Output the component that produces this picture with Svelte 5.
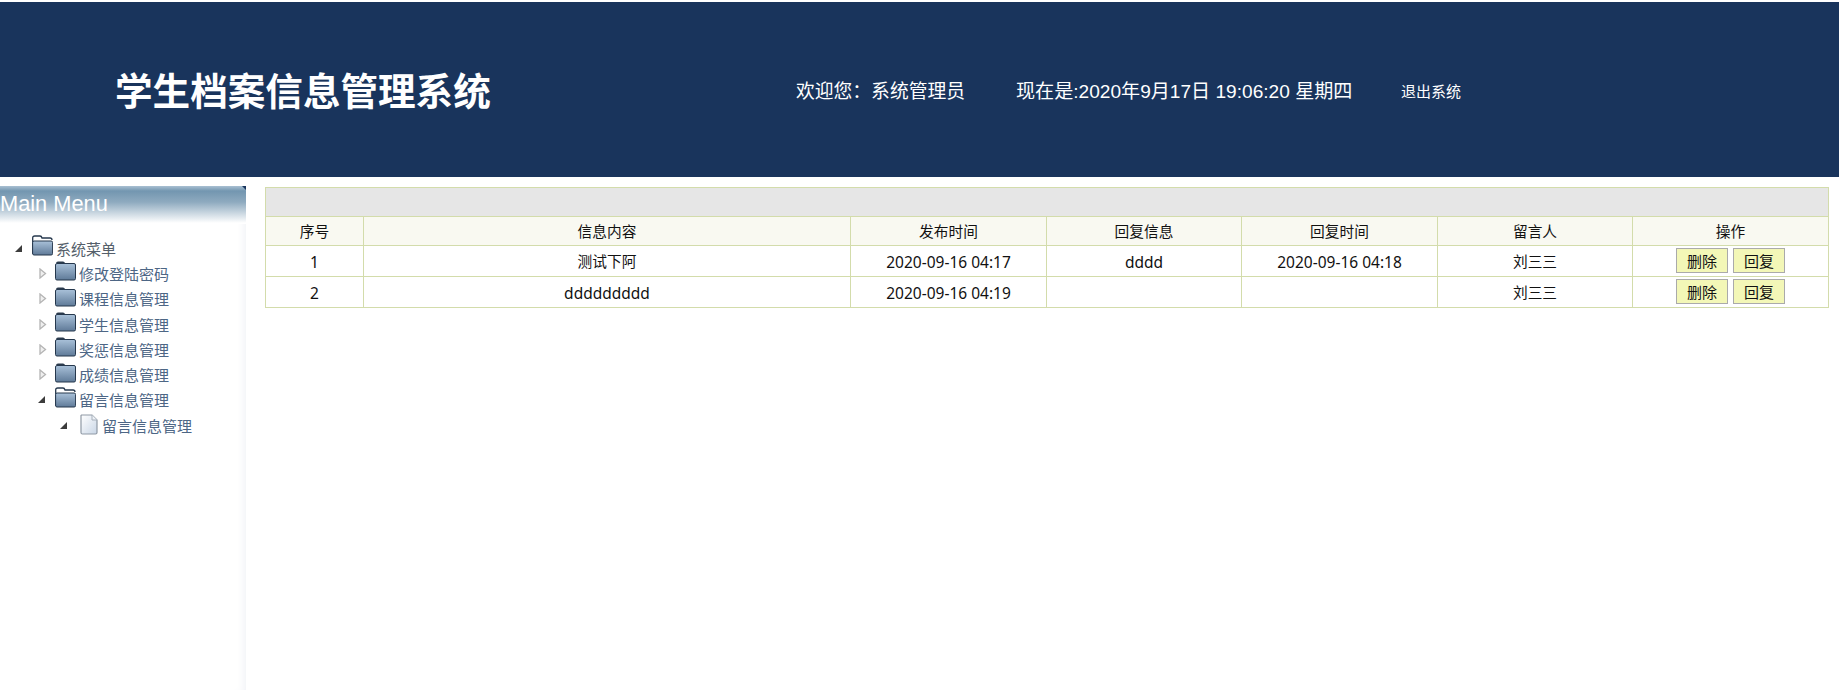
<script>
  const columns = ['序号', '信息内容', '发布时间', '回复信息', '回复时间', '留言人', '操作'];
  const rows = [
    ['1', '测试下阿', '2020-09-16 04:17', 'dddd', '2020-09-16 04:18', '刘三三'],
    ['2', 'ddddddddd', '2020-09-16 04:19', '', '', '刘三三']
  ];
  const widths = [98, 487, 196, 195, 196, 195, 196];
  const menus = ['修改登陆密码', '课程信息管理', '学生信息管理', '奖惩信息管理', '成绩信息管理'];

  // 日期和英文比中文略大一点
  const isLatin = (s) => /^[\x00-\x7f]*$/.test(s);
</script>

{#snippet closedFolder()}
  <svg class="icon" width="21" height="21" viewBox="0 0 21 21">
    <path d="M1 3.5 Q1 1.5 3 1.5 H8 Q9.5 1.5 10 3 H1 Z" fill="#2b3a4c" />
    <rect x="0.5" y="3.5" width="20" height="16.5" rx="1.5" fill="url(#folderFill)" stroke="#26384d" />
  </svg>
{/snippet}

{#snippet openFolder()}
  <svg class="icon" width="21" height="21" viewBox="0 0 21 21">
    <path d="M0.7 19 V3 Q0.7 1 2.7 1 H8 Q9.5 1 10 3 H18 Q20 3 20 5" fill="none" stroke="#26384d" stroke-width="1.3" />
    <rect x="0.6" y="6" width="20" height="14" rx="1.5" fill="url(#folderFill)" stroke="#26384d" />
  </svg>
{/snippet}

{#snippet openArrow()}
  <svg class="arrow" width="9" height="9" viewBox="0 0 9 9"><path d="M8 1 V8 H1 Z" fill="#3c3c3c" /></svg>
{/snippet}

{#snippet closedArrow()}
  <svg class="arrow closed" width="9" height="11" viewBox="0 0 9 11"><path d="M2 1 L7.5 5.5 L2 10 Z" fill="#efefef" stroke="#b4b4b4" stroke-width="1.3" /></svg>
{/snippet}

<svg class="defs" width="0" height="0">
  <defs>
    <linearGradient id="folderFill" x1="0" y1="0" x2="0" y2="1">
      <stop offset="0" stop-color="#a9c1d9" />
      <stop offset="1" stop-color="#5f7a98" />
    </linearGradient>
    <linearGradient id="fileFill" x1="0" y1="0" x2="1" y2="1">
      <stop offset="0" stop-color="#ffffff" />
      <stop offset="1" stop-color="#c9d6e6" />
    </linearGradient>
  </defs>
</svg>

<div class="page">
  <header class="top">
    <h1>学生档案信息管理系统</h1>
    <div class="info">
      <span class="welcome">欢迎您：系统管理员</span>
      <span class="now">现在是:2020年9月17日 19:06:20 星期四</span>
      <a class="quit" href="#top">退出系统</a>
    </div>
  </header>

  <div class="body">
    <aside class="side">
      <div class="side-title">Main Menu</div>
      <ul class="tree">
        <li class="root">
          {@render openArrow()}
          {@render openFolder()}
          <span class="label root-label">系统菜单</span>
        </li>
        {#each menus as menu}
          <li class="level1">
            {@render closedArrow()}
            {@render closedFolder()}
            <span class="label">{menu}</span>
          </li>
        {/each}
        <li class="level1">
          {@render openArrow()}
          {@render openFolder()}
          <span class="label">留言信息管理</span>
        </li>
        <li class="level2">
          {@render openArrow()}
          <svg class="icon file" width="18" height="21" viewBox="0 0 18 21">
            <path d="M1.5 1 H12 L17 6 V18.5 Q17 20 15.5 20 H2.5 Q1 20 1 18.5 V1.5 Z" fill="url(#fileFill)" stroke="#8f99a5" stroke-width="1.2" />
            <path d="M12 1 V6 H17" fill="#eef2f7" stroke="#a8b1bc" />
          </svg>
          <span class="label">留言信息管理</span>
        </li>
      </ul>
    </aside>

    <main class="main">
      <table>
        <colgroup>
          {#each widths as w}
            <col style="width: {w}px" />
          {/each}
        </colgroup>
        <thead>
          <tr class="caption"><th colspan="7"></th></tr>
          <tr class="heads">
            {#each columns as col}
              <th>{col}</th>
            {/each}
          </tr>
        </thead>
        <tbody>
          {#each rows as row}
            <tr>
              {#each row as cell}
                <td class:latin={isLatin(cell)}>{cell}</td>
              {/each}
              <td class="ops">
                <button type="button">删除</button>
                <button type="button">回复</button>
              </td>
            </tr>
          {/each}
        </tbody>
      </table>
    </main>
  </div>
</div>

<style>
  :global(body) {
    margin: 0;
    background: #fff;
  }

  .defs {
    position: absolute;
  }

  .page {
    height: 690px;
    overflow: hidden;
    font-family: "Noto Sans CJK SC", sans-serif;
    font-size: 14.7px;
    color: #111;
  }

  .top {
    margin-top: 2px;
    height: 175px;
    background: #19345c;
    display: flex;
    align-items: center;
    color: #fff;
    font-family: "Liberation Sans", "Noto Sans CJK SC", sans-serif;
  }

  h1 {
    margin: -3px 0 0 115px;
    width: 681px;
    font-size: 37.6px;
    font-weight: 700;
    white-space: nowrap;
  }

  .info {
    display: flex;
    align-items: center;
    white-space: nowrap;
  }

  .welcome {
    font-size: 18.8px;
    width: 220px;
  }

  .now {
    font-size: 19.1px;
    width: 384px;
  }

  .quit {
    color: #fff;
    text-decoration: none;
    font-size: 15px;
    margin-left: 1px;
    margin-top: 1px;
  }

  .body {
    display: flex;
    padding-top: 9px;
  }

  .side {
    width: 246px;
    height: 504px;
    flex-shrink: 0;
    box-shadow: inset -8px 0 8px -6px #f0f2f6;
  }

  .side-title {
    position: relative;
    height: 38px;
    line-height: 36px;
    background: linear-gradient(#a9c0d2 0, #7396b0 5px, #8eaabf 16px, #ffffff 37px);
    color: #fff;
    font-family: "Liberation Sans", sans-serif;
    font-size: 21.8px;
  }

  .side-title::after {
    content: "";
    position: absolute;
    top: 0;
    right: 0;
    border-top: 4px solid #19345c;
    border-left: 4px solid transparent;
  }

  .tree {
    list-style: none;
    margin: 11.5px 0 0;
    padding: 0;
    color: #4d6685;
    font-size: 15px;
  }

  .tree li {
    height: 25.3px;
    display: flex;
    align-items: center;
  }

  .root {
    padding-left: 14px;
  }

  .level1 {
    padding-left: 37px;
  }

  .level2 {
    padding-left: 59px;
  }

  .arrow {
    width: 9px;
    flex-shrink: 0;
    margin-right: 9px;
  }

  .arrow.closed {
    margin-left: 1px;
    margin-right: 8px;
  }

  .icon {
    flex-shrink: 0;
    margin-top: -5px;
  }

  .file {
    margin-left: 3px;
    margin-top: -1px;
  }

  .file + .label {
    margin-left: 4px;
  }

  .label {
    margin-left: 3px;
    white-space: nowrap;
  }

  .root-label {
    color: #555f6b;
  }

  .main {
    flex: 1;
    padding: 1px 10px 0 19px;
  }

  table {
    width: 1564px;
    table-layout: fixed;
    border-collapse: collapse;
  }

  th,
  td {
    border: 1px solid #d3dcab;
    text-align: center;
    font-weight: 400;
    padding: 0 0 2px;
  }

  .caption th {
    height: 26px;
    background: #e6e6e6;
  }

  .heads th {
    height: 26px;
    background: #f9f9f1;
  }

  td {
    height: 28px;
  }

  td.latin {
    font-family: "Noto Sans", sans-serif;
    font-size: 15.5px;
    padding: 1px 0 0;
  }

  .ops {
    font-size: 0;
  }

  button {
    width: 52px;
    height: 25px;
    margin: 0 2.5px;
    padding: 0;
    border: 1px solid #aaa;
    background: #f3f7b7;
    font-family: "Noto Sans CJK SC", sans-serif;
    font-size: 15px;
    color: #111;
    line-height: 1;
    vertical-align: middle;
  }
</style>
